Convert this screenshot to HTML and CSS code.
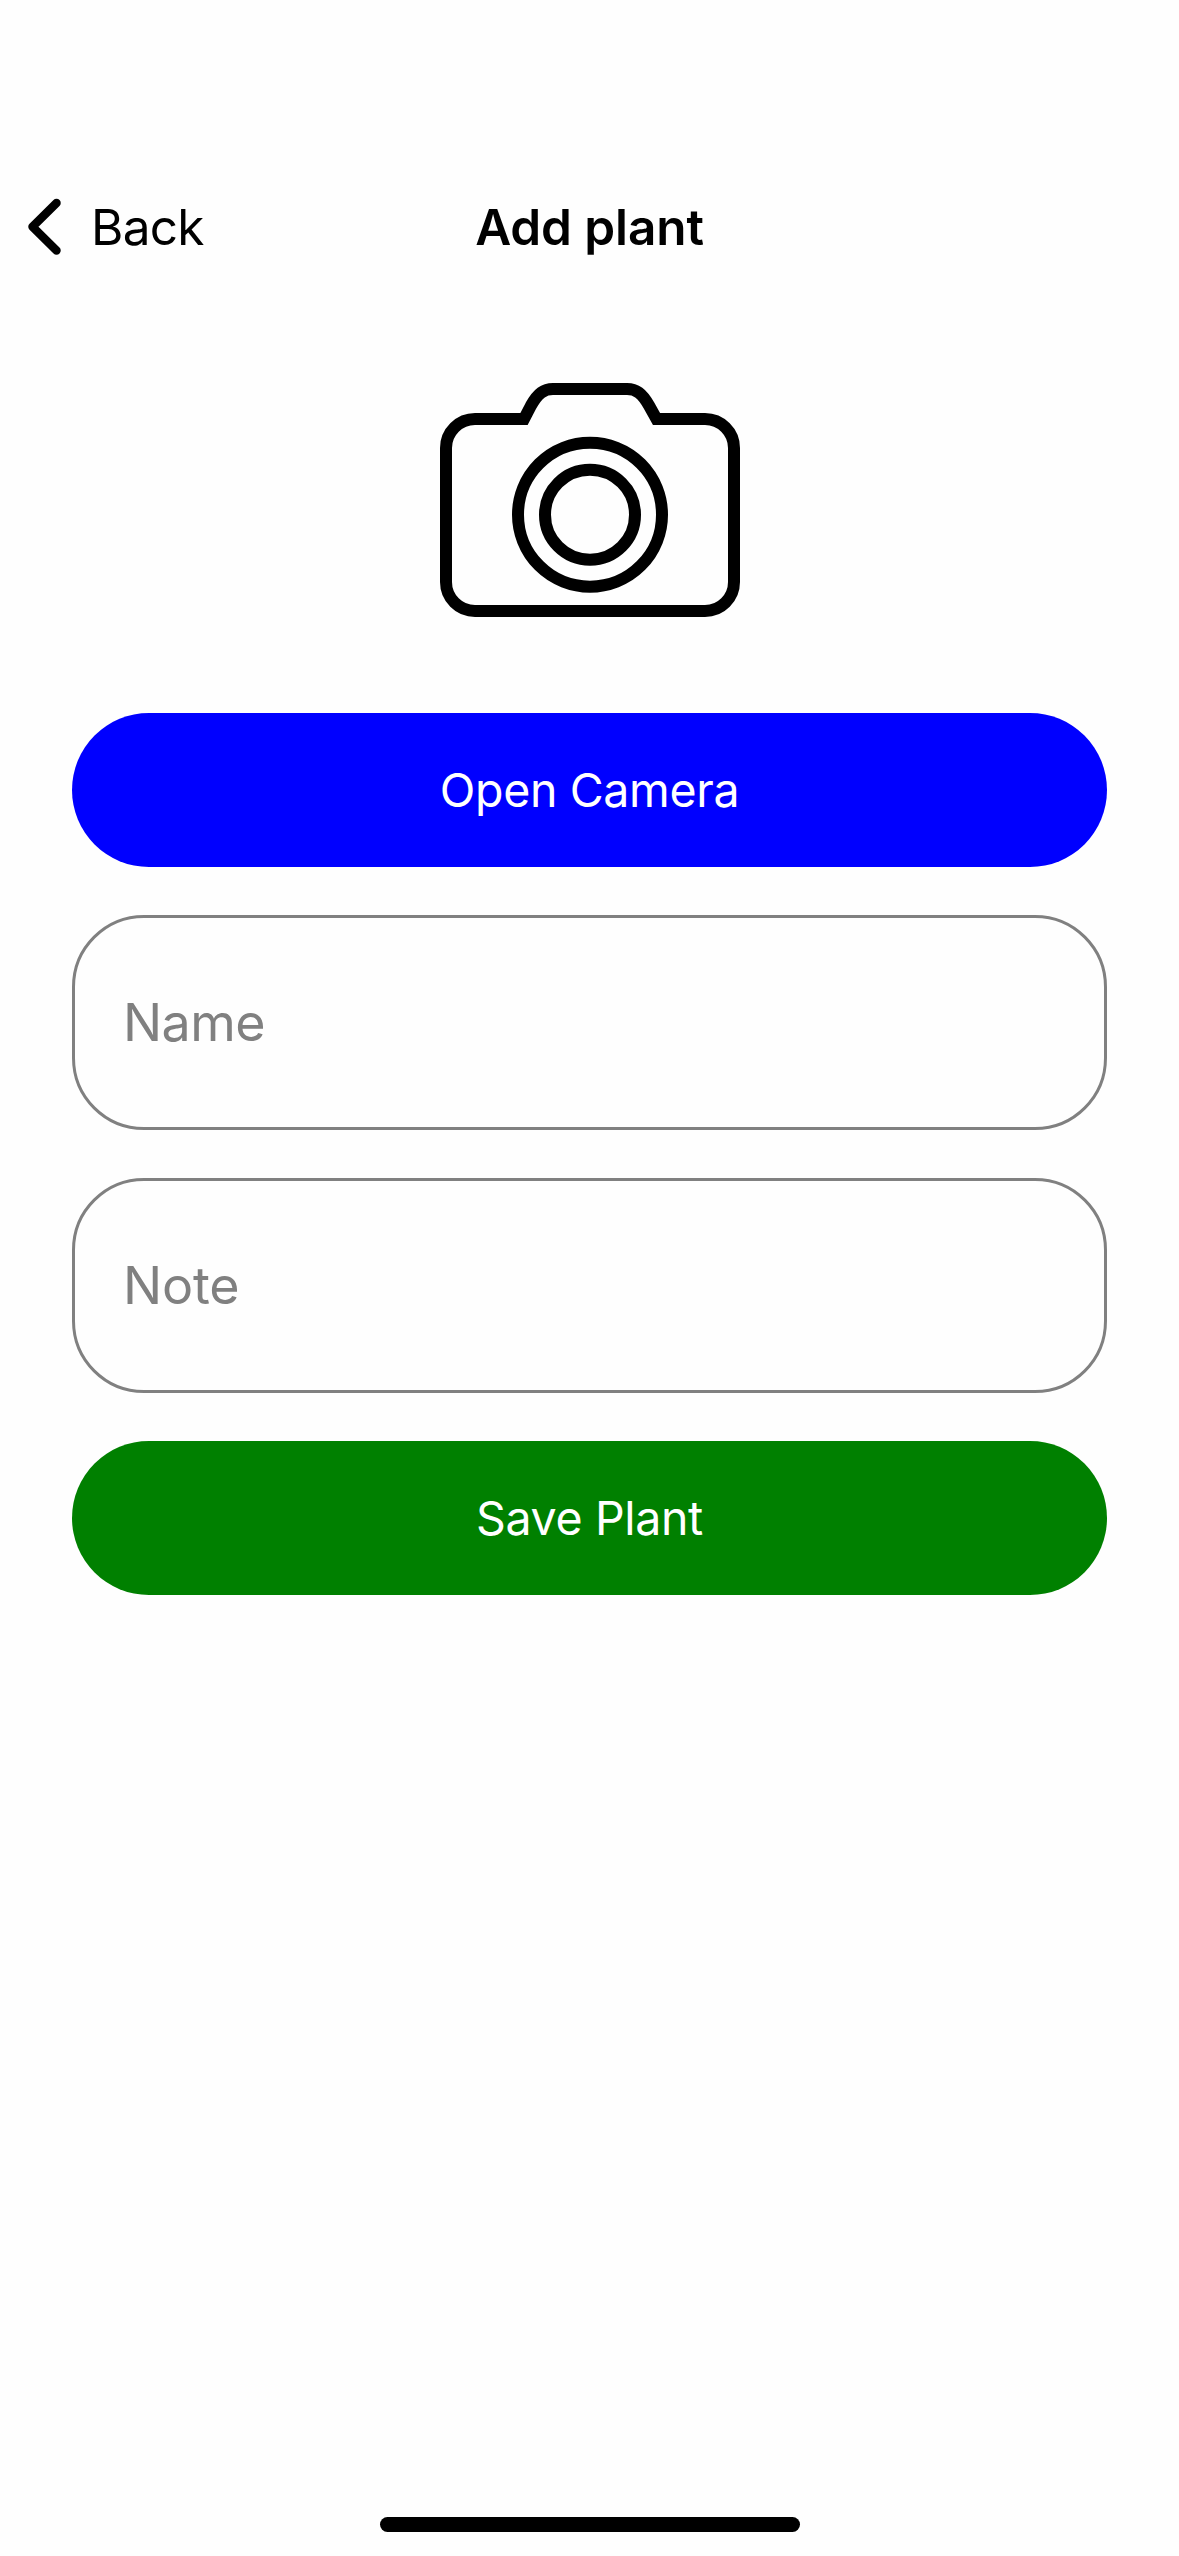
FILE: index.html
```html
<!DOCTYPE html>
<html lang="en">
<head>
<meta charset="utf-8">
<title>Add plant</title>
<link rel="stylesheet" href="styles.css">
</head>
<body>
<div class="screen">
  <header class="navbar">
    <a class="back">
      <svg class="chevron" width="40" height="60" viewBox="0 0 40 60" fill="none" stroke="#000" stroke-width="8.500" stroke-linecap="round" stroke-linejoin="round"><path d="M32.500 6 8.500 29.800 32.500 53.500"/></svg>
      <span class="back-label">Back</span>
    </a>
    <h1 class="title">Add plant</h1>
  </header>
  <main class="form">
    <div class="photo">
      <svg width="300" height="234" viewBox="0 0 300 234" fill="none" stroke="#000" stroke-width="12">
        <path d="M35 36H84L91 22.500C98 10 104 6 113 6H187C196 6 202 10 209 22.500L216.500 36H265A29 29 0 0 1 294 65V199A29 29 0 0 1 265 228H35A29 29 0 0 1 6 199V65A29 29 0 0 1 35 36Z"/>
        <circle cx="150" cy="131.700" r="72"/>
        <circle cx="150" cy="131.700" r="45"/>
      </svg>
    </div>
    <div class="button camera"><span>Open Camera</span></div>
    <div class="field"><span class="name">Name</span></div>
    <div class="field"><span class="note">Note</span></div>
    <div class="button save"><span>Save Plant</span></div>
  </main>
  <div class="home-indicator"></div>
</div>
</body>
</html>
```
FILE: styles.css
```css
* {
  box-sizing: border-box;
}

body {
  margin: 0;
  background: #fefefe;
  font-family: Inter, "Liberation Sans", sans-serif;
  color: #000;
}

.screen {
  display: flex;
  flex-direction: column;
  height: 2556px;
  padding: 177px 0 24px;
}

.navbar {
  display: grid;
  grid-template-columns: 1fr auto 1fr;
  align-items: center;
  height: 100px;
}

.back {
  display: flex;
  align-items: center;
  gap: 27px;
  padding-left: 24px;
}

.back-label {
  font-size: 49.5px;
  letter-spacing: -0.7px;
}

.title {
  margin: 0;
  font-size: 49.5px;
  font-weight: 600;
  letter-spacing: -0.1px;
}

.form {
  display: flex;
  flex-direction: column;
  gap: 48px;
  flex: 1;
  padding: 73px 72px 0;
}

.photo {
  display: flex;
  align-items: center;
  justify-content: center;
  height: 300px;
  margin-bottom: 15px;
}

.button {
  display: flex;
  align-items: center;
  justify-content: center;
  height: 154px;
  border-radius: 77px;
  color: #fff;
  font-size: 46.5px;
  letter-spacing: -0.35px;
}

.camera {
  background: #0000ff;
}

.save {
  background: #008000;
}

.field {
  display: flex;
  align-items: center;
  height: 215px;
  padding-left: 48px;
  border: 3px solid #808080;
  border-radius: 72px;
  color: #808080;
  font-size: 52px;
  letter-spacing: -0.6px;
}

.note {
  letter-spacing: -0.2px;
}

.home-indicator {
  align-self: center;
  width: 420px;
  height: 15px;
  border-radius: 8px;
  background: #000;
}
```
